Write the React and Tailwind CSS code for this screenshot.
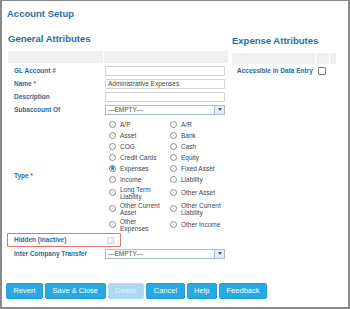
import React from 'react';

const TYPES = [
  ['A/P', 'A/R'],
  ['Asset', 'Bank'],
  ['COG', 'Cash'],
  ['Credit Cards', 'Equity'],
  ['Expenses', 'Fixed Asset'],
  ['Income', 'Liability'],
  ['Long Term Liability', 'Other Asset'],
  ['Other Current Asset', 'Other Current Liability'],
  ['Other Expenses', 'Other Income'],
];

function Label({ children, required }) {
  return (
    <span className="w-[96px] shrink-0 pl-[6px] text-[6.5px] leading-[8px] font-bold text-[#2b6a9b]">
      {children}
      {required && <span className="text-[#e0403a]"> *</span>}
    </span>
  );
}

function Input({ value }) {
  return (
    <div className="ml-px flex h-[10px] w-[120px] items-center rounded-[1px] border border-[#d4d4d4] bg-white pl-[2px] text-[6.5px] text-[#444]">
      {value}
    </div>
  );
}

function Select() {
  return (
    <div className="ml-px flex h-[10px] w-[120px] border border-[#a9bbd0] bg-white">
      <span className="flex-1 pl-[2px] text-[6.5px] leading-[8px] text-[#444]">---EMPTY---</span>
      <span className="flex w-[10px] items-center justify-center border-l border-[#a9bbd0] bg-[#e6edf5]">
        <svg width="4" height="3" viewBox="0 0 4 3">
          <path d="M0 0h4L2 3z" fill="#3d5a7e" />
        </svg>
      </span>
    </div>
  );
}

function Radio({ checked }) {
  return (
    <span
      className={`flex h-[7px] w-[7px] shrink-0 items-center justify-center rounded-full border bg-white ${
        checked ? 'border-[#3b7fd0]' : 'border-[#8c8c8c]'
      }`}
    >
      {checked && <span className="h-[3.5px] w-[3.5px] rounded-full bg-[#2f7ad6]" />}
    </span>
  );
}

function Row({ children }) {
  return <div className="flex h-[13px] items-center">{children}</div>;
}

function Button({ children, disabled }) {
  return (
    <button
      className={`h-[16px] rounded-[2px] border px-[6.5px] text-[7.5px] leading-none ${
        disabled
          ? 'border-[#b3def3] bg-[#a9daf2] text-[#dff1fb]'
          : 'border-[#1f9fd9] bg-[#29a9e1] text-white'
      }`}
    >
      {children}
    </button>
  );
}

export default function App() {
  return (
    <div className="flex h-[309px] w-[350px] flex-col border-x-2 border-t border-b-2 border-[#8a8a8a] bg-white font-['Liberation_Sans',Arial,sans-serif]">
      <h1 className="pl-[5px] pt-[7px] text-[9.5px] leading-[11px] font-bold text-[#1e6fa6]">Account Setup</h1>

      <div className="mt-[14px] flex gap-[4px] pl-[6px]">
        <section className="w-[220px]">
          <h2 className="text-[9.5px] leading-[11px] font-bold text-[#1e6fa6]">General Attributes</h2>
          <div className="mt-[7px] flex h-[12px] gap-px">
            <div className="w-[95px] bg-[#f0f0f0]" />
            <div className="flex-1 bg-[#f0f0f0]" />
          </div>

          <div className="mt-px">
            <Row>
              <Label>GL Account #</Label>
              <Input />
            </Row>
            <Row>
              <Label required>Name</Label>
              <Input value="Administrative Expenses" />
            </Row>
            <Row>
              <Label>Description</Label>
              <Input />
            </Row>
            <Row>
              <Label>Subaccount Of</Label>
              <Select />
            </Row>
          </div>

          <div className="flex items-center pt-[2.5px] pb-[0.5px]">
            <Label required>Type</Label>
            <div className="grid grid-cols-[61px_61px] pl-[5px]">
              {TYPES.flat().map((t) => (
                <div key={t} className="flex min-h-[11px] items-center gap-[4px] py-px">
                  <Radio checked={t === 'Expenses'} />
                  <span className="w-[44px] text-[6.5px] leading-[7px] text-[#444]">{t}</span>
                </div>
              ))}
            </div>
          </div>

          <div className="relative flex h-[14px] items-center">
            <Label>Hidden (inactive)</Label>
            <span className="ml-[3px] h-[7px] w-[7px] rounded-[1px] border border-[#d2d2d2] bg-[#f6f6f6]" />
            <span className="absolute top-0 -left-px h-[14px] w-[114px] rounded-[1px] border-[1.5px] border-[#e57373]" />
          </div>

          <Row>
            <Label>Inter Company Transfer</Label>
            <Select />
          </Row>
        </section>

        <section className="w-[104px]">
          <h2 className="mt-[2px] text-[9.5px] leading-[11px] font-bold text-[#1e6fa6]">Expense Attributes</h2>
          <div className="mt-[7px] flex h-[11px] gap-px">
            <div className="w-[83px] bg-[#f0f0f0]" />
            <div className="w-[13px] bg-[#f0f0f0]" />
            <div className="flex-1 bg-[#f0f0f0]" />
          </div>
          <div className="mt-px flex h-[12px] items-center gap-[5px] pl-[5px]">
            <span className="text-[6.5px] leading-[8px] font-bold text-[#2b6a9b]">Accessible in Data Entry</span>
            <span className="h-[8px] w-[8px] rounded-[1px] border border-[#777] bg-white" />
          </div>
        </section>
      </div>

      <div className="mt-auto flex gap-[2px] pb-[8px] pl-[4px]">
        <Button>Revert</Button>
        <Button>Save &amp; Close</Button>
        <Button disabled>Delete</Button>
        <Button>Cancel</Button>
        <Button>Help</Button>
        <Button>Feedback</Button>
      </div>
    </div>
  );
}
